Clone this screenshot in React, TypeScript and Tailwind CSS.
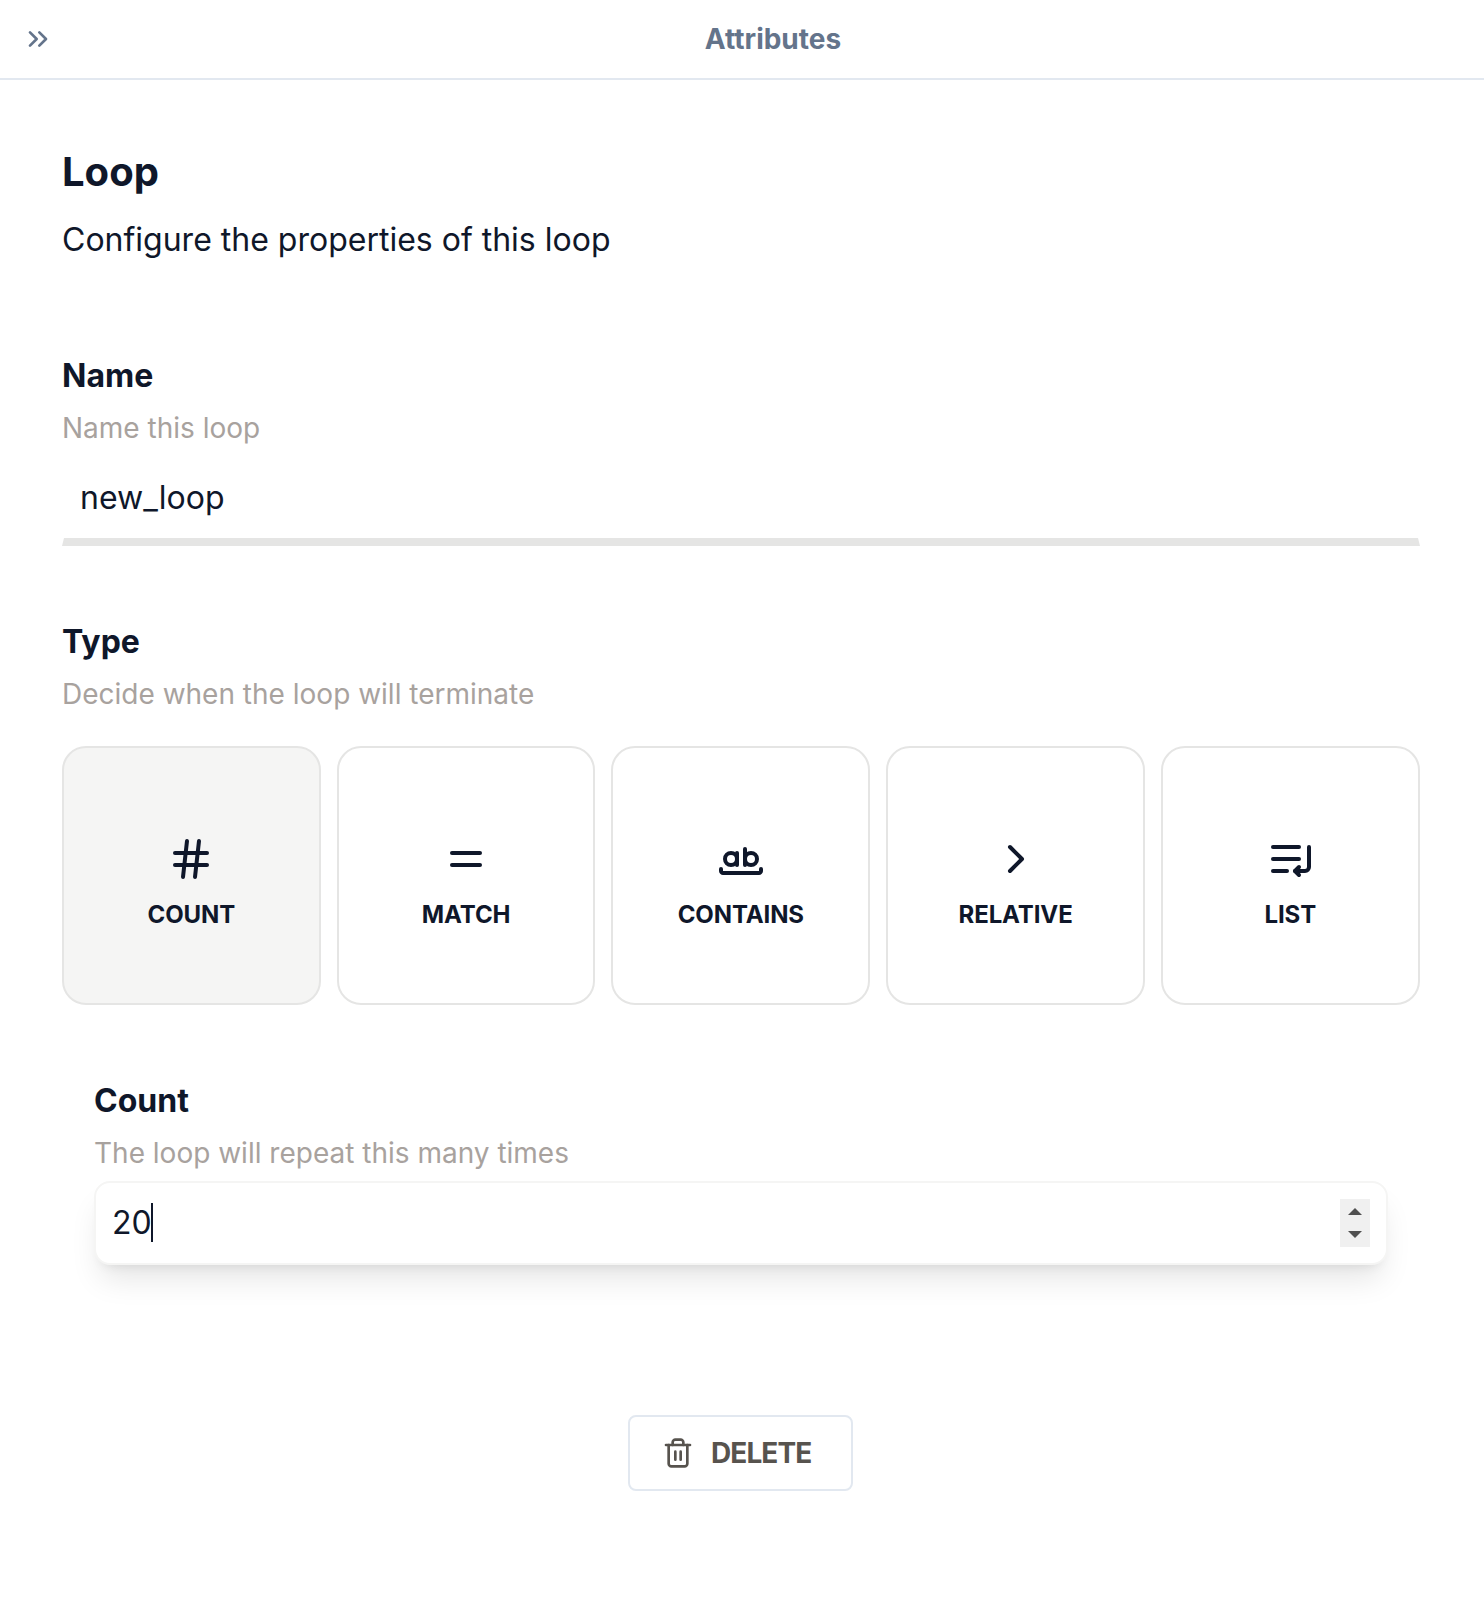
import type { ReactNode } from "react";
import { ChevronRight, ChevronsRight, Equal, Hash, WholeWord } from "lucide-react";

function ListReturnIcon() {
  return (
    <svg className="ml-px size-12" viewBox="0 0 24 24" fill="none" stroke="currentColor" strokeWidth="2" strokeLinecap="round" strokeLinejoin="round">
      <path d="M16 12H3" />
      <path d="M16 6H3" />
      <path d="M10 18H3" />
      <path d="M21 6v10a2 2 0 0 1-2 2h-5" />
      <path d="m16 16-2 2 2 2" />
    </svg>
  );
}

function TrashIcon() {
  return (
    <svg className="size-8" viewBox="0 0 24 24" fill="none" stroke="currentColor" strokeWidth="2" strokeLinecap="round" strokeLinejoin="round">
      <path d="M3 6h18" />
      <path d="M19 6v14c0 1-1 2-2 2H7c-1 0-2-1-2-2V6" />
      <path d="M8 6V4c0-1 1-2 2-2h4c1 0 2 1 2 2v2" />
      <path d="M10 11v6M14 11v6" />
    </svg>
  );
}

const types: { label: string; icon: ReactNode; active?: boolean }[] = [
  { label: "COUNT", icon: <Hash className="size-12" />, active: true },
  { label: "MATCH", icon: <Equal className="size-12" /> },
  { label: "CONTAINS", icon: <WholeWord className="size-12" /> },
  { label: "RELATIVE", icon: <ChevronRight className="size-12" /> },
  { label: "LIST", icon: <ListReturnIcon /> },
];

function FieldLabel({ title, hint }: { title: string; hint: string }) {
  return (
    <div>
      <h2 className="text-[32px] leading-[48px] font-bold">{title}</h2>
      <p className="mt-2 text-[28px] leading-10 text-[#a8a29e]">{hint}</p>
    </div>
  );
}

export default function App() {
  return (
    <div className="h-[1608px] w-[1484px] overflow-hidden bg-white font-['Inter',sans-serif] text-[#0f172a]">
      <header className="flex h-20 items-center border-b-2 border-[#e2e8f0] pl-[22px] text-[#64748b]">
        <ChevronsRight className="size-8" />
        <h1 className="flex-1 pl-2 text-center text-[28px] leading-10 font-bold">Attributes</h1>
      </header>

      <main className="flex flex-col pt-[60px] pr-16 pl-[62px]">
        <h2 className="text-[40px] leading-[64px] font-bold">Loop</h2>
        <p className="mt-3 text-[32px] leading-[48px]">Configure the properties of this loop</p>

        <section className="mt-[88px]">
          <FieldLabel title="Name" hint="Name this loop" />
          <div className="mt-2 flex h-[90px] border-x-2 border-b-8 border-x-transparent border-b-[#e5e5e4] px-4 pt-[18px]">
            <span className="text-[32px] leading-[48px]">new_loop</span>
          </div>
        </section>

        <section className="mt-[72px]">
          <FieldLabel title="Type" hint="Decide when the loop will terminate" />
          <div className="mt-8 grid grid-cols-5 gap-4 pr-[0.3px]">
            {types.map(({ label, icon, active }) => (
              <button
                key={label}
                className={
                  active
                    ? "flex aspect-square flex-col items-center justify-center gap-3 rounded-3xl border-2 border-[#e5e5e4] bg-[#f5f5f4] pt-5"
                    : "flex aspect-square flex-col items-center justify-center gap-3 rounded-3xl border-2 border-[#e5e5e4] pt-5"
                }
              >
                {icon}
                <span className="text-2xl leading-10 font-bold tracking-[-0.1px]">{label}</span>
              </button>
            ))}
          </div>
        </section>

        <section className="mt-[72px] px-8">
          <FieldLabel title="Count" hint="The loop will repeat this many times" />
          <div className="mt-2 flex h-[84px] items-center rounded-2xl border-2 border-[#f5f5f4] bg-white px-4 shadow-[0_20px_30px_-6px_rgba(0,0,0,0.1),0_8px_12px_-8px_rgba(0,0,0,0.1)]">
            <span className="text-[32px] leading-[48px]">20</span>
            <span className="-ml-px h-[39px] w-0.5 bg-[#0f172a]" />
            <span className="ml-auto flex h-12 w-[30px] flex-col items-center justify-between bg-[#f0f0f0] pt-[9px] pb-[9px] text-[#505050]">
              <svg className="h-[7px] w-[14px]" viewBox="0 0 14 7" fill="currentColor">
                <path d="M0 7 7 0l7 7z" />
              </svg>
              <svg className="h-[7px] w-[14px]" viewBox="0 0 14 7" fill="currentColor">
                <path d="M0 0h14L7 7z" />
              </svg>
            </span>
          </div>
        </section>

        <button className="mt-[150px] mr-px flex h-[76px] w-[225px] items-center self-center rounded-lg border-2 border-[#e2e8f0] pl-8 text-[#57534e]">
          <TrashIcon />
          <span className="ml-[17px] text-[28px] leading-10 font-bold tracking-[-0.9px]">DELETE</span>
        </button>
      </main>
    </div>
  );
}
